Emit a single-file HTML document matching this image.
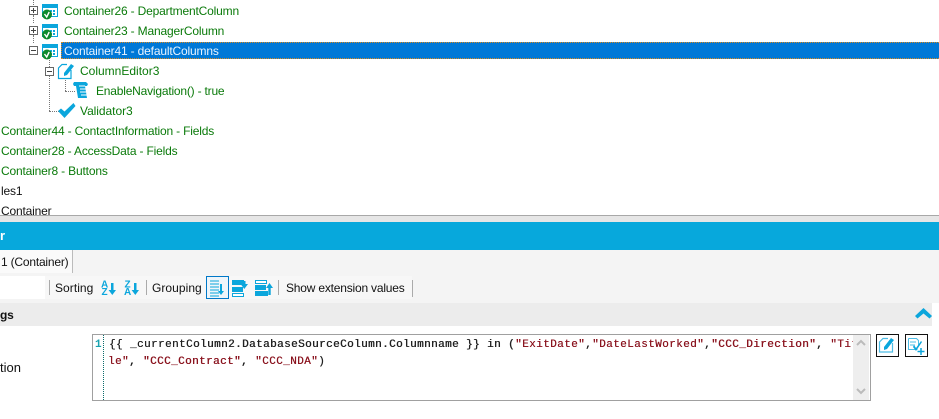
<!DOCTYPE html>
<html><head><meta charset="utf-8">
<style>
html,body{margin:0;padding:0;background:#fff}
#p{position:relative;width:939px;height:419px;overflow:hidden;background:#fff;font-family:"Liberation Sans",sans-serif;font-size:12px}
.a{position:absolute}
.t{position:absolute;white-space:nowrap;line-height:16px;height:16px;letter-spacing:-.17px}
.g{color:#0a7a0a}
.k{color:#111}
.m{position:absolute;white-space:pre;font-family:"Liberation Mono",monospace;font-size:11px;line-height:16px}
.v{position:absolute;border-left:1px dotted #777;width:0}
.h{position:absolute;border-top:1px dotted #777;height:0}
svg{position:absolute;overflow:visible}
</style></head><body><div id="p">

<div class="v" style="left:33px;top:0;height:5px"></div>
<div class="v" style="left:33px;top:15px;height:8px"></div>
<div class="v" style="left:33px;top:35px;height:8px"></div>
<div class="v" style="left:49px;top:58px;height:53px"></div>
<div class="h" style="left:49px;top:111px;width:10px"></div>
<div class="v" style="left:65px;top:77px;height:14px"></div>
<div class="h" style="left:65px;top:91px;width:10px"></div>

<svg style="left:0;top:0" width="100" height="60">
<g fill="#fff" stroke="#666"><rect x="29.500" y="6.500" width="8" height="8"/><rect x="29.500" y="26.500" width="8" height="8"/><rect x="29.500" y="46.500" width="8" height="8"/></g>
<path d="M31 10.500h5M33.500 8v5M31 30.500h5M33.500 28v5M31 50.500h5" stroke="#444" fill="none"/>
<g id="c"><rect x="42.500" y="4.500" width="15" height="12" fill="#fff" stroke="#0ba6dc"/><rect x="42" y="4" width="16" height="4" fill="#0ba6dc"/><path d="M50 10h2v2h-2zM53 10h2v2h-2zM53 13h2v2h-2zM50 13h2v2h-2z" fill="#0ba6dc"/><circle cx="47" cy="14.500" r="5" fill="#0d8a2c"/><path d="M44.500 14l2.200 3 2.500-5" stroke="#fff" stroke-width="1.400" fill="none"/></g>
<use href="#c" y="20"/><use href="#c" y="40"/>
</svg>

<div class="t g" style="left:64px;top:3px">Container26 - DepartmentColumn</div>
<div class="t g" style="left:64px;top:23px">Container23 - ManagerColumn</div>
<div class="a" style="left:61px;top:42px;width:878px;height:17px;background:#0078d7;box-sizing:border-box;border:1px dotted #d98a20;border-right:none"></div>
<div class="t" style="left:64px;top:43px;color:#e8f4ff">Container41 - defaultColumns</div>

<svg style="left:0;top:60px" width="120" height="60">
<rect x="45.500" y="7.500" width="8" height="8" fill="#fff" stroke="#666"/><path d="M47 11.500h5" stroke="#444"/>
<path d="M67 4.500h-5l-3.500 3.500v10.500h12.500v-8.500" fill="#fff" stroke="#0ba6dc" stroke-width="1.200"/>
<path d="M64 13l7-9 3 2-7 9-3 1z" fill="#0ba6dc"/>
<path d="M74 22h12l2 2-1 2h-2l2 12H78l-2-12h-2l-1-2z" fill="#0ba6dc"/>
<path d="M79 26h6M80 29h6M80 32h6M81 35h6" stroke="#fff"/>
<path d="M58 51l3-2.500 3.500 3 9-8.500 2 3-11 12z" fill="#0ba6dc"/>
</svg>
<div class="t g" style="left:80px;top:63px;letter-spacing:0">ColumnEditor3</div>
<div class="t g" style="left:96px;top:83px;letter-spacing:-.2px">EnableNavigation() - true</div>
<div class="t g" style="left:80px;top:103px;letter-spacing:-.05px">Validator3</div>
<div class="t g" style="left:1px;top:123px">Container44 - ContactInformation - Fields</div>
<div class="t g" style="left:1px;top:143px">Container28 - AccessData - Fields</div>
<div class="t g" style="left:1px;top:163px">Container8 - Buttons</div>
<div class="t k" style="left:1px;top:183px">les1</div>
<div class="t k" style="left:1px;top:203px">Container</div>

<div class="a" style="left:0;top:215px;width:939px;height:1px;background:#a8a8a8"></div>
<div class="a" style="left:0;top:216px;width:939px;height:6px;background:#e6e6e6"></div>
<div class="a" style="left:0;top:222px;width:939px;height:28px;background:#07a8dc"></div>
<div class="t" style="left:0;top:228px;color:#fff;font-weight:bold;font-size:13px">r</div>

<div class="a" style="left:0;top:250px;width:939px;height:53px;background:#f4f4f4"></div>
<div class="a" style="left:0;top:250px;width:72px;height:23px;background:#fafafa;border-right:1px solid #bbb"></div>
<div class="t k" style="left:1px;top:254px;letter-spacing:-.2px">1 (Container)</div>
<div class="a" style="left:0;top:276px;width:45px;height:23px;background:#fff"></div>
<div class="a" style="left:45px;top:276px;width:367px;height:23px;background:#f7f7f7"></div>
<div class="a" style="left:49px;top:280px;width:1px;height:15px;background:#aaa"></div>
<div class="a" style="left:146px;top:280px;width:1px;height:15px;background:#aaa"></div>
<div class="a" style="left:278px;top:280px;width:1px;height:15px;background:#aaa"></div>
<div class="a" style="left:412px;top:280px;width:1px;height:17px;background:#aaa"></div>
<div class="t k" style="left:55px;top:280px;letter-spacing:.05px">Sorting</div>
<div class="t k" style="left:152px;top:280px;letter-spacing:.05px">Grouping</div>
<div class="t k" style="left:286px;top:280px;letter-spacing:-.2px">Show extension values</div>
<div class="a" style="left:206px;top:276px;width:21px;height:21px;border:1px solid #0078c8;background:#eef5fa"></div>

<svg style="left:0;top:270px" width="280" height="35">
<g fill="#0ba6dc" font-family="Liberation Sans,sans-serif" font-weight="bold" font-size="10"><text x="101" y="17.500">A</text><text x="101.500" y="25">Z</text><text x="124.500" y="17.500">Z</text><text x="124" y="25">A</text></g>
<path d="M111 13h2.500v7h2.500l-3.700 5-3.700-5h2.400zM134 13h2.500v7h2.500l-3.700 5-3.700-5h2.400z" fill="#0ba6dc"/>
<path d="M210 11h9M210 14h9M210 17h9M210 20h9M210 23h9M210 26h9" stroke="#0ba6dc"/><path d="M220 14h2v7h2l-3 4-3-4h2z" fill="#0ba6dc"/>
<path d="M232 10h12v5h-12zM232 17h11v5h-11z" fill="#0ba6dc"/><rect x="232.500" y="23.500" width="11" height="3" fill="#fff" stroke="#0ba6dc"/><path d="M243 11h2.500v3h2.500l-3.700 5-3.700-5h2.400z" fill="#0ba6dc"/>
<rect x="255.500" y="10.500" width="11" height="3" fill="#fff" stroke="#0ba6dc"/><path d="M255 15h11v5h-11zM255 21h13v5h-13z" fill="#0ba6dc"/><path d="M266 18l3.500-5 3.500 5h-2.300v7h-2.400v-7z" fill="#0ba6dc"/>
</svg>

<div class="a" style="left:0;top:303px;width:932px;height:23px;background:#ececec"></div>
<div class="t k" style="left:0;top:307px;font-weight:bold">gs</div>
<svg style="left:915px;top:307px" width="18" height="14"><path d="M0 9l8.500-8 8.500 8-2.500 2.500-6-5-6 5z" fill="#0ba6dc"/></svg>

<div class="t k" style="left:0;top:360px;font-size:13px;letter-spacing:0">tion</div>
<div class="a" style="left:92px;top:334px;width:777px;height:65px;border:1px solid #a0a0a0;background:#fff"></div>
<div class="a" style="left:103px;top:335px;width:0;height:65px;border-left:1px dotted #0b6a6a"></div>
<div class="a" style="left:853px;top:335px;width:16px;height:65px;background:#eeeeee"></div>
<svg style="left:853px;top:335px" width="16" height="65"><path d="M4 10l4-4 4 4" fill="none" stroke="#bbb" stroke-width="2"/><path d="M4 54l4 4 4-4" fill="none" stroke="#bbb" stroke-width="2"/></svg>
<div class="m" style="left:95px;top:337px;color:#1aa3b0;font-weight:bold">1</div>
<div class="a" style="left:108px;top:337px;width:745px;height:38px;overflow:hidden">
<div class="m" style="left:1px;top:0;color:#222;letter-spacing:.4px;text-shadow:.3px 0 0 currentColor">{{ _currentColumn2.DatabaseSourceColumn.Columnname }} in (<span style="color:#8b1520">"ExitDate"</span>,<span style="color:#8b1520">"DateLastWorked"</span>,<span style="color:#8b1520">"CCC_Direction"</span>, <span style="color:#8b1520">"Tit</span></div>
<div class="m" style="left:0;top:17px;color:#222;letter-spacing:.4px;text-shadow:.3px 0 0 currentColor"><span style="color:#8b1520">le"</span>, <span style="color:#8b1520">"CCC_Contract"</span>, <span style="color:#8b1520">"CCC_NDA"</span>)</div>
</div>

<div class="a" style="left:876px;top:334px;width:21px;height:21px;border:1px solid #111;background:#fff"></div>
<div class="a" style="left:905px;top:334px;width:21px;height:21px;border:1px solid #111;background:#fff"></div>
<svg style="left:876px;top:334px" width="52" height="24">
<path d="M12 4.500H7L3.500 8v10h13V9" fill="none" stroke="#4dbde6" stroke-width="1.200"/><path d="M8 13l7-9 3 2-7 9-3 1z" fill="#0ba6dc"/>
<path d="M32.500 4.500h8l2 2v6M32.500 4.500v11h9" fill="none" stroke="#4dbde6"/><path d="M34 8h6M34 11h5" stroke="#4dbde6"/><path d="M38 11l2 3 5-7 1 1-6 9-3-4z" fill="#0ba6dc"/><path d="M45 14v7M41.500 17.500h7" stroke="#0ba6dc" stroke-width="1.500"/>
</svg>
</div></body></html>
